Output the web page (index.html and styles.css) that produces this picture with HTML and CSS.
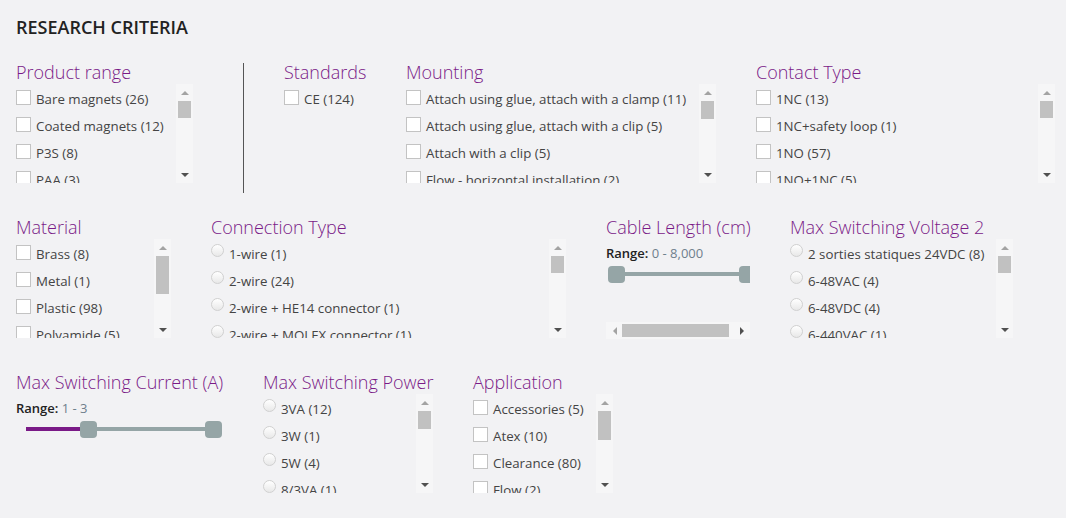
FILE: index.html
```html
<!DOCTYPE html>
<html lang="en">
<head>
  <meta charset="UTF-8" />
  <meta name="viewport" content="width=device-width, initial-scale=1.0" />
  <title>Research criteria</title>
  <link rel="stylesheet" href="styles.css">
</head>
<body>
<div class="criteria">
  <h2 class="criteria-title">Research criteria</h2>

  <div class="row">
    <div class="filter w-range">
      <h3>Product range</h3>
      <div class="list-box">
        <div class="options">
          <label class="option"><input type="checkbox">Bare magnets (26)</label>
          <label class="option"><input type="checkbox">Coated magnets (12)</label>
          <label class="option"><input type="checkbox">P3S (8)</label>
          <label class="option"><input type="checkbox">PAA (3)</label>
          <label class="option"><input type="checkbox">PAB (4)</label>
          <label class="option"><input type="checkbox">PAC (6)</label>
        </div>
        <div class="vscroll">
          <span class="arrow arrow-up"></span>
          <span class="thumb" style="height: 17px"></span>
          <span class="arrow arrow-down"></span>
        </div>
      </div>
    </div>

    <div class="divider"></div>

    <div class="filter w-standards">
      <h3>Standards</h3>
      <div class="list-box">
        <div class="options">
          <label class="option"><input type="checkbox">CE (124)</label>
        </div>
      </div>
    </div>

    <div class="filter w-mounting">
      <h3>Mounting</h3>
      <div class="list-box">
        <div class="options">
          <label class="option"><input type="checkbox">Attach using glue, attach with a clamp (11)</label>
          <label class="option"><input type="checkbox">Attach using glue, attach with a clip (5)</label>
          <label class="option"><input type="checkbox">Attach with a clip (5)</label>
          <label class="option"><input type="checkbox">Flow - horizontal installation (2)</label>
          <label class="option"><input type="checkbox">Flow - vertical installation (1)</label>
        </div>
        <div class="vscroll">
          <span class="arrow arrow-up"></span>
          <span class="thumb" style="height: 18px"></span>
          <span class="arrow arrow-down"></span>
        </div>
      </div>
    </div>

    <div class="filter w-contact">
      <h3>Contact Type</h3>
      <div class="list-box">
        <div class="options">
          <label class="option"><input type="checkbox">1NC (13)</label>
          <label class="option"><input type="checkbox">1NC+safety loop (1)</label>
          <label class="option"><input type="checkbox">1NO (57)</label>
          <label class="option"><input type="checkbox">1NO+1NC (5)</label>
          <label class="option"><input type="checkbox">1NO+safety loop (2)</label>
        </div>
        <div class="vscroll">
          <span class="arrow arrow-up"></span>
          <span class="thumb" style="height: 17px"></span>
          <span class="arrow arrow-down"></span>
        </div>
      </div>
    </div>
  </div>

  <div class="row">
    <div class="filter w-material">
      <h3>Material</h3>
      <div class="list-box">
        <div class="options">
          <label class="option"><input type="checkbox">Brass (8)</label>
          <label class="option"><input type="checkbox">Metal (1)</label>
          <label class="option"><input type="checkbox">Plastic (98)</label>
          <label class="option"><input type="checkbox">Polyamide (5)</label>
          <label class="option"><input type="checkbox">Stainless steel (10)</label>
        </div>
        <div class="vscroll">
          <span class="arrow arrow-up"></span>
          <span class="thumb" style="height: 38px"></span>
          <span class="arrow arrow-down"></span>
        </div>
      </div>
    </div>

    <div class="filter w-connection">
      <h3>Connection Type</h3>
      <div class="list-box">
        <div class="options">
          <label class="option"><input type="radio" name="connection">1-wire (1)</label>
          <label class="option"><input type="radio" name="connection">2-wire (24)</label>
          <label class="option"><input type="radio" name="connection">2-wire + HE14 connector (1)</label>
          <label class="option"><input type="radio" name="connection">2-wire + MOLEX connector (1)</label>
          <label class="option"><input type="radio" name="connection">3-wire (36)</label>
        </div>
        <div class="vscroll">
          <span class="arrow arrow-up"></span>
          <span class="thumb" style="height: 17px"></span>
          <span class="arrow arrow-down"></span>
        </div>
      </div>
    </div>

    <div class="filter w-cable">
      <h3>Cable Length (cm)</h3>
      <div class="range-box">
        <div class="range-inner">
          <div class="range-label"><b>Range:</b> 0 - 8,000</div>
          <div class="slider slider-cable">
            <div class="slider-track"></div>
            <div class="slider-thumb" style="left: 0%"></div>
            <div class="slider-thumb" style="left: 100%"></div>
          </div>
        </div>
        <div class="hscroll">
          <span class="arrow arrow-left"></span>
          <span class="thumb" style="width: 107px"></span>
          <span class="arrow arrow-right"></span>
        </div>
      </div>
    </div>

    <div class="filter w-voltage">
      <h3>Max Switching Voltage 2</h3>
      <div class="list-box">
        <div class="options">
          <label class="option"><input type="radio" name="voltage">2 sorties statiques 24VDC (8)</label>
          <label class="option"><input type="radio" name="voltage">6-48VAC (4)</label>
          <label class="option"><input type="radio" name="voltage">6-48VDC (4)</label>
          <label class="option"><input type="radio" name="voltage">6-440VAC (1)</label>
          <label class="option"><input type="radio" name="voltage">12VDC (3)</label>
        </div>
        <div class="vscroll">
          <span class="arrow arrow-up"></span>
          <span class="thumb" style="height: 17px"></span>
          <span class="arrow arrow-down"></span>
        </div>
      </div>
    </div>
  </div>

  <div class="row">
    <div class="filter w-current">
      <h3>Max Switching Current (A)</h3>
      <div class="range-label"><b>Range:</b> 1 - 3</div>
      <div class="slider">
        <div class="slider-track"></div>
        <div class="slider-fill" style="width: 33.3%"></div>
        <div class="slider-thumb" style="left: 33.3%"></div>
        <div class="slider-thumb" style="left: 100%"></div>
      </div>
    </div>

    <div class="filter w-power">
      <h3>Max Switching Power</h3>
      <div class="list-box">
        <div class="options">
          <label class="option"><input type="radio" name="power">3VA (12)</label>
          <label class="option"><input type="radio" name="power">3W (1)</label>
          <label class="option"><input type="radio" name="power">5W (4)</label>
          <label class="option"><input type="radio" name="power">8/3VA (1)</label>
          <label class="option"><input type="radio" name="power">10W (18)</label>
        </div>
        <div class="vscroll">
          <span class="arrow arrow-up"></span>
          <span class="thumb" style="height: 18px"></span>
          <span class="arrow arrow-down"></span>
        </div>
      </div>
    </div>

    <div class="filter w-application">
      <h3>Application</h3>
      <div class="list-box">
        <div class="options">
          <label class="option"><input type="checkbox">Accessories (5)</label>
          <label class="option"><input type="checkbox">Atex (10)</label>
          <label class="option"><input type="checkbox">Clearance (80)</label>
          <label class="option"><input type="checkbox">Flow (2)</label>
          <label class="option"><input type="checkbox">Level (14)</label>
        </div>
        <div class="vscroll">
          <span class="arrow arrow-up"></span>
          <span class="thumb" style="height: 29px"></span>
          <span class="arrow arrow-down"></span>
        </div>
      </div>
    </div>
  </div>
</div>
</body>
</html>
```

FILE: styles.css
```css
:root {
  --violet: #7a1a87;
  --fond: #f2f2f4;
  --piste: #f6f6f7;
  --texte: #444;
  --curseur: #95a5a6;
}

* { box-sizing: border-box; margin: 0; padding: 0; }

body {
  font-family: 'Open Sans', 'Liberation Sans', sans-serif;
  background: var(--fond);
  color: var(--texte);
}

.criteria {
  padding: 15px 16px 0;
}

.criteria-title {
  font-size: 18px;
  line-height: 24px;
  font-weight: 600;
  text-transform: uppercase;
  color: #222;
  margin-bottom: 21px;
}

.row {
  display: flex;
  gap: 40px;
  height: 123px;
  margin-bottom: 32px;
}

.filter {
  flex-shrink: 0;
}

.filter h3 {
  font-size: 18px;
  line-height: 24px;
  font-weight: 300;
  color: var(--violet);
  white-space: nowrap;
}

.w-range { width: 177px; }
.w-standards { width: 82px; }
.w-mounting { width: 310px; }
.w-contact { width: 299px; }
.w-material { width: 155px; }
.w-connection { width: 355px; }
.w-cable { width: 144px; }
.w-voltage { width: 223px; }
.w-current { width: 207px; }
.w-power { width: 170px; }
.w-application { width: 140px; }

.divider {
  width: 1px;
  height: 130px;
  margin: 3px 0 0 10px;
  background: #555;
  flex-shrink: 0;
}

/* listes */
.list-box {
  display: flex;
  height: 99px;
}

.options {
  flex: 1;
  min-width: 0;
  padding-top: 5px;
  overflow: hidden;
}

.option {
  display: flex;
  align-items: flex-start;
  gap: 5px;
  height: 27px;
  font-size: 13.3px;
  line-height: 20px;
  white-space: nowrap;
}

.option input {
  appearance: none;
  -webkit-appearance: none;
  flex-shrink: 0;
  background: #fff;
}

.option input[type="checkbox"] {
  width: 15px;
  height: 15px;
  margin-top: 1px;
  border: 1px solid #c3c3c3;
}

.option input[type="radio"] {
  width: 13px;
  height: 13px;
  border: 1px solid #d0d0d0;
  border-radius: 50%;
  background: linear-gradient(#fff, #e8e8e8);
}

/* barres de défilement */
.vscroll,
.hscroll {
  display: flex;
  flex-shrink: 0;
  background: var(--piste);
}

.vscroll {
  flex-direction: column;
  width: 17px;
}

.hscroll {
  height: 17px;
}

.vscroll .thumb,
.hscroll .thumb {
  background: #c1c1c1;
}

.vscroll .thumb { margin: 0 2px; }
.hscroll .thumb { margin: 2px 0 2px -1px; }

.arrow {
  display: flex;
  align-items: center;
  justify-content: center;
  width: 17px;
  height: 17px;
  flex-shrink: 0;
}

.vscroll .arrow-down { margin-top: auto; }
.hscroll .arrow-right { margin-left: auto; }

.arrow::before {
  content: "";
  border: 4px solid transparent;
}

.arrow-up::before {
  border-top-width: 0;
  border-bottom-color: #a3a3a3;
}

.arrow-down::before {
  border-bottom-width: 0;
  border-top-color: #505050;
}

.arrow-left::before {
  border-left-width: 0;
  border-right-color: #a3a3a3;
}

.arrow-right::before {
  border-right-width: 0;
  border-left-color: #505050;
}

/* curseurs */
.range-box {
  display: flex;
  flex-direction: column;
  height: 100px;
}

.range-inner {
  flex: 1;
  overflow: hidden;
}

.range-label {
  margin-top: 4px;
  font-size: 13px;
  line-height: 20px;
  color: #6f7f8c;
  white-space: nowrap;
}

.range-label b {
  font-weight: 600;
  color: #222;
}

.slider {
  position: relative;
  height: 17px;
  margin: 3px 10px 0;
}

.slider-cable {
  width: 131px;
}

.slider-track,
.slider-fill {
  position: absolute;
  top: 6px;
  left: 0;
  height: 4px;
}

.slider-track {
  right: 0;
  background: var(--curseur);
}

.slider-fill {
  background: var(--violet);
}

.slider-thumb {
  position: absolute;
  top: 0;
  width: 17px;
  height: 17px;
  margin-left: -8.5px;
  border-radius: 4px;
  background: var(--curseur);
}
```
